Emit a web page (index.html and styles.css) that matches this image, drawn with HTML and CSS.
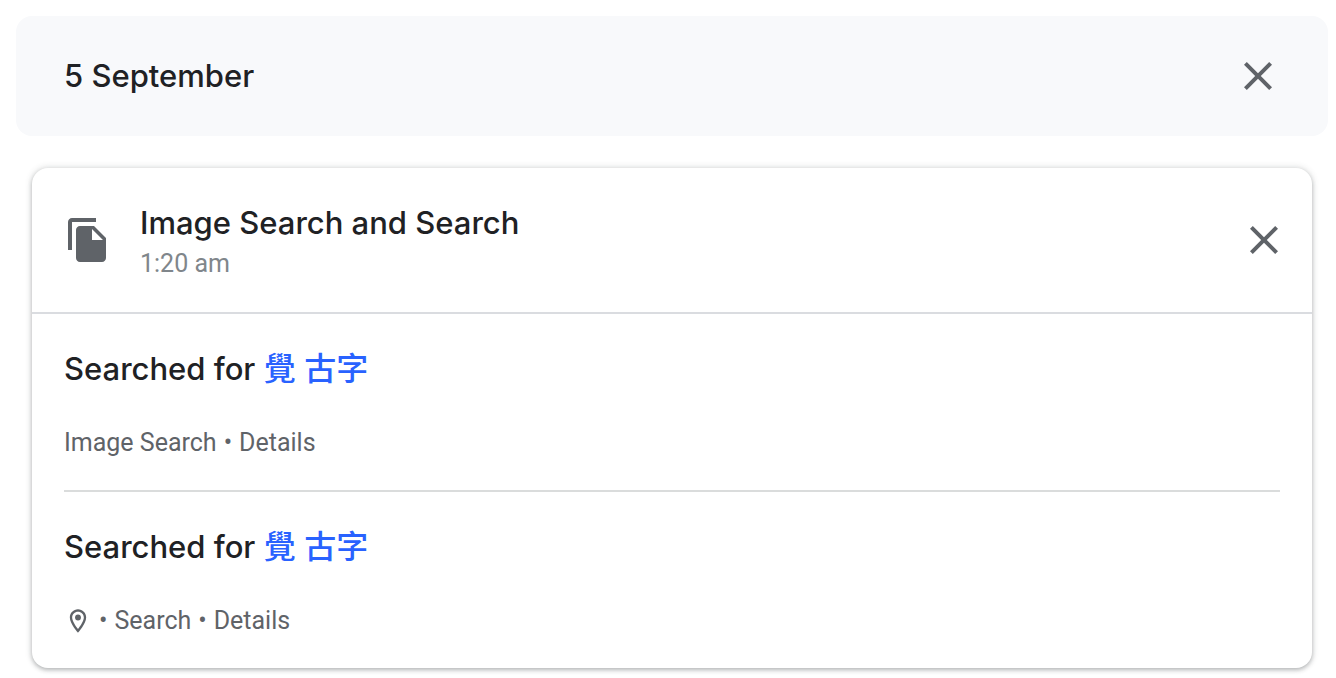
FILE: index.html
```html
<!DOCTYPE html>
<html lang="en-GB">
<head>
<meta charset="utf-8">
<meta name="viewport" content="width=device-width, initial-scale=1">
<title>My Activity</title>
<link rel="stylesheet" href="styles.css">
</head>
<body>
<main class="activity">
  <header class="day">
    <h1 class="heading">5 September</h1>
    <button class="close" type="button" aria-label="Delete all activity from 5 September">
      <svg viewBox="0 0 24 24" aria-hidden="true"><path d="M19 6.41 17.59 5 12 10.59 6.41 5 5 6.41 10.59 12 5 17.59 6.41 19 12 13.41 17.59 19 19 17.59 13.41 12z"/></svg>
    </button>
  </header>
  <section class="card">
    <header class="card-header">
      <svg class="product-icon" viewBox="0 0 24 24" aria-hidden="true"><path d="M16 1H4c-1.1 0-2 .9-2 2v14h2V3h12V1zm-1 4 6 6v10c0 1.1-.9 2-2 2H7.99C6.89 23 6 22.1 6 21V7c0-1.1.89-2 1.99-2h7.01zm-1 7h5.5L14 6.5V12z"/></svg>
      <div class="card-title">
        <h2 class="heading">Image Search and Search</h2>
        <p class="time">1:20 am</p>
      </div>
      <button class="close" type="button" aria-label="Delete activity item Image Search and Search">
        <svg viewBox="0 0 24 24" aria-hidden="true"><path d="M19 6.41 17.59 5 12 10.59 6.41 5 5 6.41 10.59 12 5 17.59 6.41 19 12 13.41 17.59 19 19 17.59 13.41 12z"/></svg>
      </button>
    </header>
    <article class="item">
      <h3 class="heading">Searched for <a class="query" href="#" lang="zh-Hant">覺 古字</a></h3>
      <p class="meta"><span>Image Search</span><span>•</span><a class="details" href="#">Details</a></p>
    </article>
    <article class="item">
      <h3 class="heading">Searched for <a class="query" href="#" lang="zh-Hant">覺 古字</a></h3>
      <p class="meta"><svg class="pin" viewBox="0 0 24 24" role="img" aria-label="Location"><path d="M12 2C8.13 2 5 5.13 5 9c0 5.25 7 13 7 13s7-7.75 7-13c0-3.87-3.13-7-7-7zM7 9c0-2.76 2.24-5 5-5s5 2.24 5 5c0 2.88-2.88 7.19-5 9.88C9.92 16.21 7 11.85 7 9z"/><circle cx="12" cy="9" r="2.5"/></svg><span>•</span><span>Search</span><span>•</span><a class="details" href="#">Details</a></p>
    </article>
  </section>
</main>
</body>
</html>
```

FILE: styles.css
```css
* {
  box-sizing: border-box;
}

body {
  margin: 0;
  background: #fff;
  color: #202124;
  font-family: Roboto, "Liberation Sans", "Noto Sans CJK TC", sans-serif;
}

h1, h2, h3, p {
  margin: 0;
}

a {
  text-decoration: none;
}

.activity {
  padding: 16px 8px 10px 16px;
}

.day {
  display: flex;
  align-items: center;
  justify-content: space-between;
  padding: 36px 46px 36px 48px;
  border-radius: 16px;
  background: #f8f9fb;
}

.heading {
  font-family: Inter, "Noto Sans CJK TC", sans-serif;
  font-size: 31px;
  font-weight: 500;
  line-height: 48px;
}

.close {
  flex: none;
  width: 48px;
  height: 48px;
  padding: 0;
  border: 0;
  background: none;
  cursor: pointer;
}

.close svg {
  display: block;
  width: 48px;
  height: 48px;
  fill: #5f6368;
}

.card {
  margin: 32px 16px 0;
  border-radius: 16px;
  background: #fff;
  box-shadow: 0 2px 4px rgba(60, 64, 67, 0.3), 0 0 6px 1px rgba(60, 64, 67, 0.15);
}

.card-header {
  display: flex;
  align-items: center;
  padding: 31px 24px 31px 32px;
  border-bottom: 2px solid #dadce0;
}

.product-icon {
  flex: none;
  width: 48px;
  height: 48px;
  fill: #5f6368;
}

.card-title {
  flex: 1;
  padding-left: 28px;
}

.time {
  color: #80868b;
  font-size: 25px;
  line-height: 34px;
}

.item {
  margin: 0 32px;
  padding: 31px 0;
}

.item + .item {
  border-top: 2px solid #dadcdc;
}

.query {
  color: #2962ff;
  font-size: 32px;
  line-height: 32px;
}

.meta {
  display: flex;
  align-items: center;
  gap: 7px;
  margin-top: 34px;
  color: #5f6368;
  font-size: 25px;
  line-height: 32px;
}

.details {
  color: inherit;
}

.pin {
  flex: none;
  width: 28px;
  height: 28px;
  fill: #5f6368;
}
```
